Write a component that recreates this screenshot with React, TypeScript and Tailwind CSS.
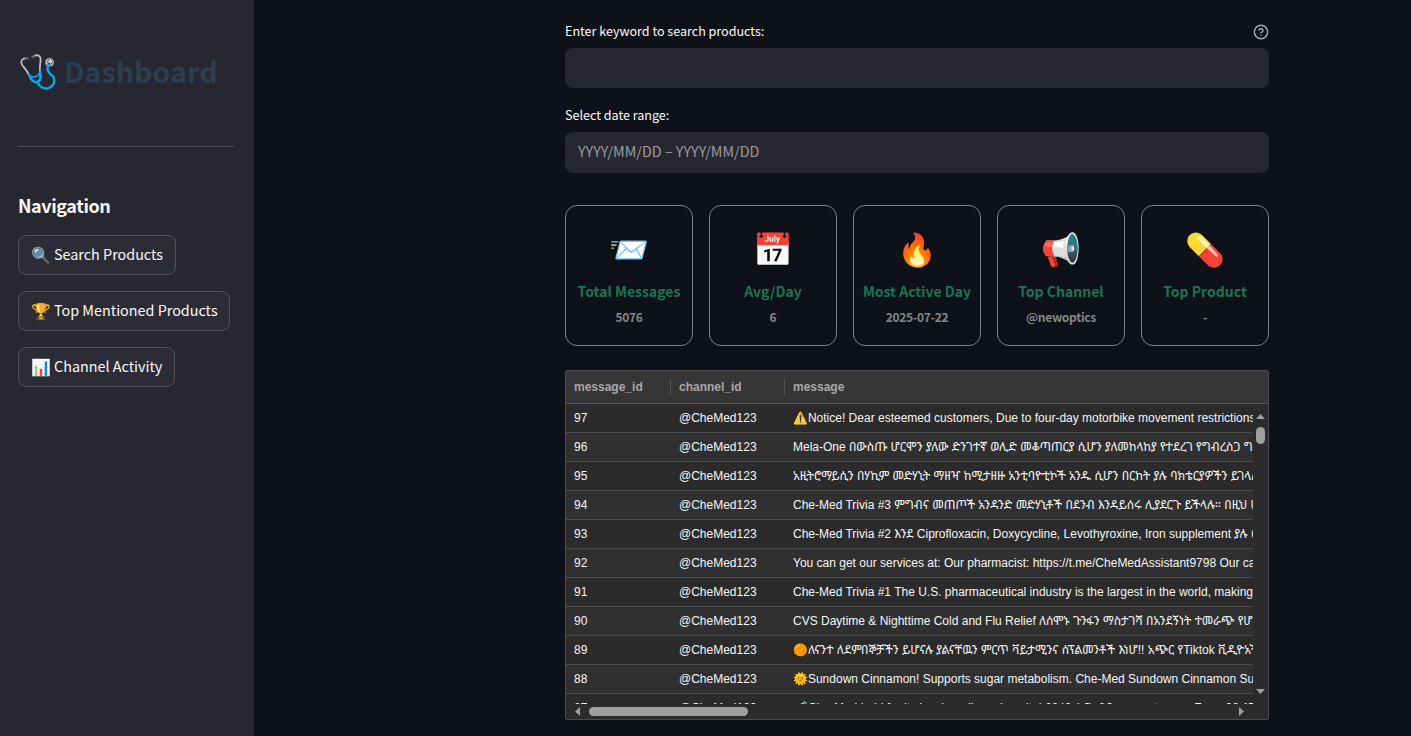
import type { ReactNode } from "react";

const sans = "font-['Noto_Sans_CJK_SC','Noto_Color_Emoji',sans-serif]";

const navItems = [
  { icon: "🔍", label: "Search Products", width: "w-[158px]" },
  { icon: "🏆", label: "Top Mentioned Products", width: "w-[212px]" },
  { icon: "📊", label: "Channel Activity", width: "w-[157px]" },
];

const stats = [
  { icon: "📨", label: "Total Messages", value: "5076" },
  { icon: "📅", label: "Avg/Day", value: "6" },
  { icon: "🔥", label: "Most Active Day", value: "2025-07-22" },
  { icon: "📢", label: "Top Channel", value: "@newoptics" },
  { icon: "💊", label: "Top Product", value: "-" },
];

const rows: { id: number; message: string }[] = [
  { id: 97, message: "⚠️Notice! Dear esteemed customers, Due to four-day motorbike movement restrictions" },
  { id: 96, message: "Mela-One በውስጡ ሆርሞን ያለው ድንገተኛ ወሊድ መቆጣጠርያ ሲሆን ያለመከላከያ የተደረገ የግብረስጋ ግ" },
  { id: 95, message: "አዚትሮማይሲን በሃኪም መድሃኒት ማዘዣ ከሚታዘዙ አንቲባዮቲኮች አንዱ ሲሆን በርከት ያሉ ባክቴርያዎችን ይገላሉ" },
  { id: 94, message: "Che-Med Trivia #3 ምግብና መጠጦች አንዳንድ መድሃኒቶች በደንብ እንዳይሰሩ ሊያደርጉ ይችላሉ። በዚህ ሀ" },
  { id: 93, message: "Che-Med Trivia #2 እንደ Ciprofloxacin, Doxycycline, Levothyroxine, Iron supplement ያሉ መ" },
  { id: 92, message: "You can get our services at: Our pharmacist: https://t.me/CheMedAssistant9798 Our ca" },
  { id: 91, message: "Che-Med Trivia #1 The U.S. pharmaceutical industry is the largest in the world, making" },
  { id: 90, message: "CVS Daytime & Nighttime Cold and Flu Relief ለሰሞኑ ጉንፋን ማስታገሻ በአንደኝነት ተመራጭ የሆ" },
  { id: 89, message: "🟠ለናንተ ለደምበኞቻችን ይሆናሉ ያልናቸዉን ምርጥ ቫይታሚንና ሰፕልመንቶች እነሆ!! አጭር የTiktok ቪዲዮአች" },
  { id: 88, message: "🌞Sundown Cinnamon! Supports sugar metabolism. Che-Med Sundown Cinnamon Su" },
  { id: 87, message: "📢Che-Med held for its local medicare hospital በዓሉን ስናከብር our customers From 08 ATM el" },
];

function FieldLabel({ children }: { children: ReactNode }) {
  return <span className="text-[12.55px] leading-6 text-[#fafafa]">{children}</span>;
}

function Sidebar() {
  return (
    <aside className="flex h-full w-[254px] shrink-0 flex-col bg-[#262730] pl-[18px]">
      <div className="mt-[49px] flex h-11 items-center text-[#2c3e50]">
        <span className="w-[46px] pb-[3px] text-[32.5px] leading-none">🩺</span>
        <h1 className="text-[28.7px] leading-[44px] font-bold whitespace-nowrap">Dashboard</h1>
      </div>
      <div className="mt-[53px] h-px w-[216px] bg-[#4c4d56]" />
      <h3 className="mt-[43px] h-[30px] text-[18px] leading-[30px] font-bold tracking-[-0.4px] text-[#fafafa]">Navigation</h3>
      <nav className="mt-[15px] flex flex-col gap-4">
        {navItems.map((item) => (
          <button
            key={item.label}
            className={`flex h-10 items-center rounded-lg border border-[#51525b] bg-[#2b2c36] pb-[2px] pl-3 text-[14.37px] whitespace-nowrap text-[#fafafa] ${item.width}`}
          >
            <span className="w-[23px] shrink-0 pb-px text-left text-[16px] leading-6">{item.icon}</span>
            <span className="leading-6">{item.label}</span>
          </button>
        ))}
      </nav>
    </aside>
  );
}

function StatCard({ icon, label, value }: { icon: string; label: string; value: string }) {
  return (
    <div className="flex h-[141px] flex-col items-center rounded-xl border border-[#808080] pt-[21px] whitespace-nowrap">
      <div className="h-10 text-[32px] leading-10">{icon}</div>
      <div className="mt-3 text-[14px] leading-6 font-bold text-[#1b7455]">{label}</div>
      <div className="mt-[2px] text-[12px] leading-6 font-bold tracking-[-0.3px] text-[#868686]">{value}</div>
    </div>
  );
}

function DataGrid() {
  return (
    <div className="mt-6 flex h-[350px] flex-col rounded-[2px] border border-[#4c4c4c] bg-[#2b2b2b] font-['Liberation_Sans','Noto_Color_Emoji','Noto_Sans_Ethiopic','Droid_Sans_Ethiopic','Abyssinica_SIL','Noto_Serif_Ethiopic',sans-serif] text-[12px]">
      <div className="flex h-[33px] shrink-0 items-center border-b border-[#555] bg-[#363636] font-bold text-[#a8a8a8]">
        <div className="flex h-4 w-[105px] items-center border-r border-[#555] pl-2">message_id</div>
        <div className="flex h-4 w-[114px] items-center border-r border-[#555] pl-2">channel_id</div>
        <div className="pl-2">message</div>
      </div>
      <div className="flex h-[300px] shrink-0">
        <div className="w-[687px] overflow-hidden">
          {rows.map((row, i) => (
            <div
              key={row.id}
              className={`flex h-[29px] items-center border-b border-[#4c4c4c] whitespace-nowrap text-[#f5f5f5] ${i % 2 ? "bg-[#303030]" : "bg-[#2b2b2b]"}`}
            >
              <div className="w-[105px] shrink-0 pl-2">{row.id}</div>
              <div className="w-[114px] shrink-0 pl-2">@CheMed123</div>
              <div className="pl-2 leading-[28px]">{row.message}</div>
            </div>
          ))}
        </div>
        <div className="flex w-[15px] flex-col items-center pt-[10px]">
          <svg width="9" height="5" viewBox="0 0 9 5"><path d="M0 5 4.5 0 9 5Z" fill="#9f9f9f" /></svg>
          <div className="mt-[8px] h-[17px] w-[9px] rounded-full bg-[#9f9f9f]" />
          <svg className="mt-[245px]" width="9" height="5" viewBox="0 0 9 5"><path d="M0 0 4.5 5 9 0Z" fill="#9f9f9f" /></svg>
        </div>
      </div>
      <div className="flex h-[15px] items-center pl-[9px]">
        <svg width="5" height="9" viewBox="0 0 5 9"><path d="M5 0 0 4.5 5 9Z" fill="#9f9f9f" /></svg>
        <div className="ml-[9px] h-[9px] w-[159px] rounded-full bg-[#9f9f9f]" />
        <svg className="ml-[491px]" width="5" height="9" viewBox="0 0 5 9"><path d="M0 0 5 4.5 0 9Z" fill="#9f9f9f" /></svg>
      </div>
    </div>
  );
}

export default function App() {
  return (
    <div className={`flex h-[736px] w-[1411px] overflow-hidden bg-[#0e1117] ${sans}`}>
      <Sidebar />
      <main className="ml-[311px] flex w-[704px] flex-col pt-[19px]">
        <div className="flex h-[29px] items-start justify-between">
          <FieldLabel>Enter keyword to search products:</FieldLabel>
          <svg className="mt-[5px]" width="16" height="16" viewBox="0 0 24 24" fill="none" stroke="#a6a7ab" strokeWidth="2.2" strokeLinecap="round" strokeLinejoin="round">
            <circle cx="12" cy="12" r="10" />
            <path d="M9.09 9a3 3 0 0 1 5.83 1c0 2-3 3-3 3" />
            <path d="M12 17h.01" />
          </svg>
        </div>
        <div className="h-10 rounded-lg bg-[#262730]" />
        <div className="mt-[15px] flex h-[29px] items-start">
          <FieldLabel>Select date range:</FieldLabel>
        </div>
        <div className="flex h-[41px] items-center rounded-lg bg-[#262730] pb-[4px] pl-[13px] text-[14.35px] text-[#9b9ba0]">
          YYYY/MM/DD – YYYY/MM/DD
        </div>
        <div className="mt-8 grid grid-cols-5 gap-4">
          {stats.map((s) => (
            <StatCard key={s.label} {...s} />
          ))}
        </div>
        <DataGrid />
      </main>
    </div>
  );
}
